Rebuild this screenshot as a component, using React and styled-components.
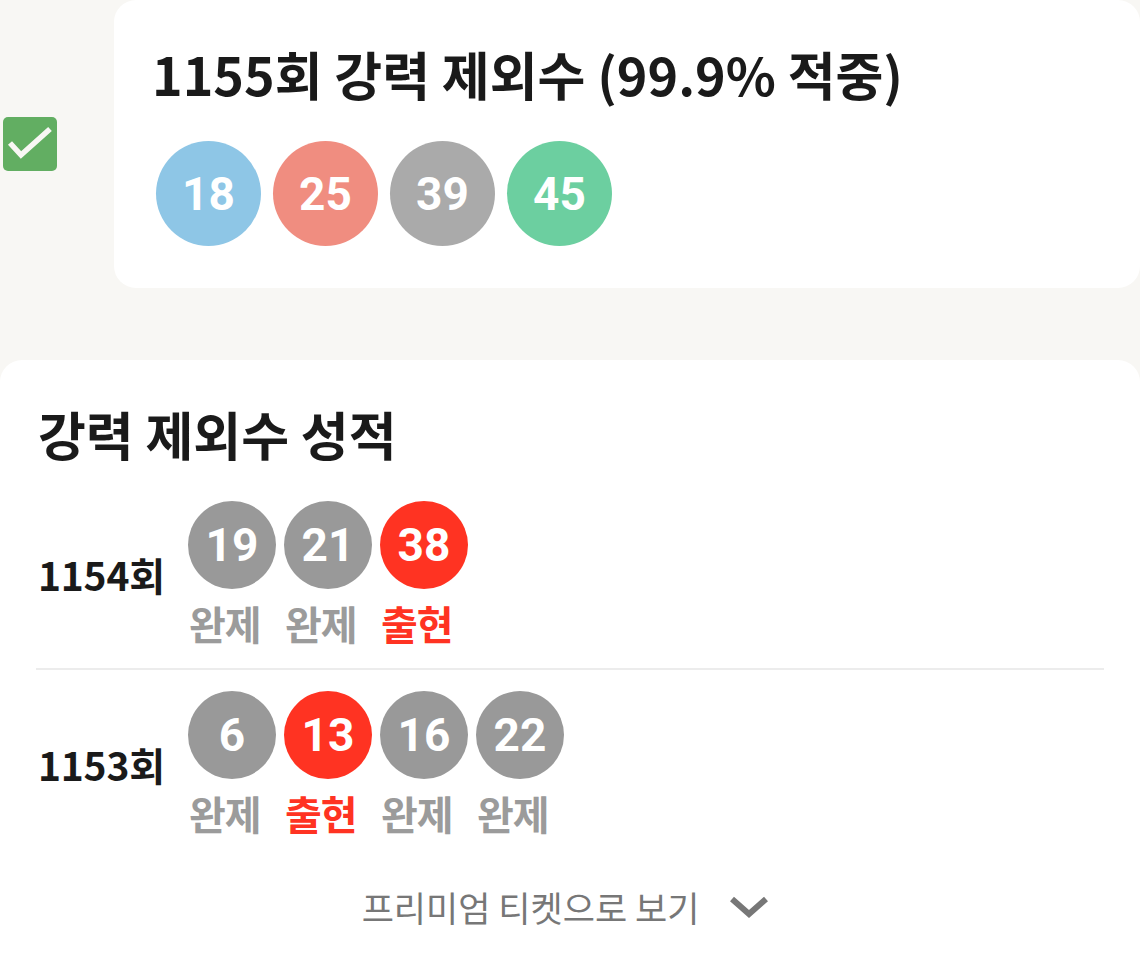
import React from "react";
import styled, { createGlobalStyle } from "styled-components";

const GlobalStyle = createGlobalStyle`
  html, body {
    margin: 0;
    padding: 0;
    background: #f8f7f4;
  }
  body {
    font-family: "Noto Sans CJK KR", "Noto Sans", sans-serif;
    color: #1a1a1a;
  }
`;

const Page = styled.div`
  width: 1140px;
  display: flex;
  flex-direction: column;
  gap: 72px;
`;

const TopRow = styled.div`
  display: flex;
  align-items: center;
`;

const Check = styled.div`
  width: 54px;
  height: 54px;
  margin-left: 3px;
  border-radius: 5px;
  background: #62ae62;
  display: flex;
  align-items: center;
  justify-content: center;
  flex-shrink: 0;
`;

const Card = styled.div`
  background: #ffffff;
  border-radius: 22px;
  box-sizing: border-box;
`;

const PickCard = styled(Card)`
  flex: 1;
  margin-left: 57px;
  height: 288px;
  padding: 34px 0 0 38px;
`;

const PickTitle = styled.h1`
  margin: 0;
  font-size: 52px;
  line-height: 80px;
  font-weight: 700;
`;

const BallRow = styled.div`
  display: flex;
  gap: ${(p) => p.$gap}px;
  margin: ${(p) => p.$top || 0}px 0 0 4px;
`;

const Ball = styled.div`
  width: ${(p) => p.$size}px;
  height: ${(p) => p.$size}px;
  border-radius: 50%;
  background: ${(p) => p.$color};
  color: #ffffff;
  display: flex;
  align-items: center;
  justify-content: center;
  font-family: Roboto, "Noto Sans", sans-serif;
  font-weight: 700;
  font-size: 46px;
  flex-shrink: 0;
`;

const StatsCard = styled(Card)`
  padding: 38px 36px 28px 36px;
  min-height: 640px;
`;

const SectionTitle = styled.h2`
  margin: 0 0 0 2px;
  font-size: 52px;
  line-height: 72px;
  font-weight: 700;
`;

const RoundRow = styled.div`
  display: flex;
  align-items: center;
  padding: ${(p) => p.$pad};
  border-bottom: ${(p) => (p.$divider ? "2px solid #ececec" : "none")};
`;

const RoundLabel = styled.div`
  width: 150px;
  padding-left: 2px;
  font-size: 39px;
  font-weight: 700;
  letter-spacing: -0.2px;
`;

const Picks = styled.div`
  display: flex;
  gap: 8px;
`;

const PickCol = styled.div`
  display: flex;
  flex-direction: column;
  align-items: flex-start;
  width: 88px;
`;

const Status = styled.div`
  margin: 10px 0 0 1px;
  font-size: 40px;
  line-height: 48px;
  font-weight: 700;
  color: ${(p) => (p.$hit ? "#ff3322" : "#9b9b9b")};
  letter-spacing: -1px;
  white-space: nowrap;
`;

const MoreButton = styled.button`
  margin: 45px auto 0;
  display: flex;
  align-items: center;
  gap: 30px;
  background: none;
  border: none;
  padding: 0 9px 0 0;
  font-family: "Noto Sans CJK KR", sans-serif;
  font-size: 35px;
  line-height: 50px;
  font-weight: 400;
  color: #777777;
  cursor: pointer;
`;

const topBalls = [
  { n: 18, c: "#8ec6e6" },
  { n: 25, c: "#f08d80" },
  { n: 39, c: "#aaaaaa" },
  { n: 45, c: "#6ccfa0" },
];

const rounds = [
  {
    round: "1154회",
    picks: [
      { n: 19, hit: false },
      { n: 21, hit: false },
      { n: 38, hit: true },
    ],
  },
  {
    round: "1153회",
    picks: [
      { n: 6, hit: false },
      { n: 13, hit: true },
      { n: 16, hit: false },
      { n: 22, hit: false },
    ],
  },
];

export default function App() {
  return (
    <>
      <GlobalStyle />
      <Page>
        <TopRow>
          <Check>
            <svg width="54" height="54" viewBox="0 0 54 54">
              <path
                d="M7 26 L18 38 L47 12"
                fill="none"
                stroke="#f8f7f4"
                strokeWidth="5.5"
              />
            </svg>
          </Check>
          <PickCard>
            <PickTitle>1155회 강력 제외수 (99.9% 적중)</PickTitle>
            <BallRow $gap={12} $top={27}>
              {topBalls.map((b) => (
                <Ball key={b.n} $size={105} $color={b.c}>
                  {b.n}
                </Ball>
              ))}
            </BallRow>
          </PickCard>
        </TopRow>
        <StatsCard>
          <SectionTitle>강력 제외수 성적</SectionTitle>
          {rounds.map((r, i) => (
            <RoundRow
              key={r.round}
              $divider={i === 0}
              $pad={i === 0 ? "31px 0 21px" : "21px 0 0"}
            >
              <RoundLabel>{r.round}</RoundLabel>
              <Picks>
                {r.picks.map((p) => (
                  <PickCol key={p.n}>
                    <Ball $size={88} $color={p.hit ? "#ff3322" : "#999999"}>
                      {p.n}
                    </Ball>
                    <Status $hit={p.hit}>{p.hit ? "출현" : "완제"}</Status>
                  </PickCol>
                ))}
              </Picks>
            </RoundRow>
          ))}
          <MoreButton>
            프리미엄 티켓으로 보기
            <svg width="40" height="26" viewBox="0 0 40 26">
              <path
                d="M3 5 L20 20 L37 5"
                fill="none"
                stroke="#777777"
                strokeWidth="6"
              />
            </svg>
          </MoreButton>
        </StatsCard>
      </Page>
    </>
  );
}
